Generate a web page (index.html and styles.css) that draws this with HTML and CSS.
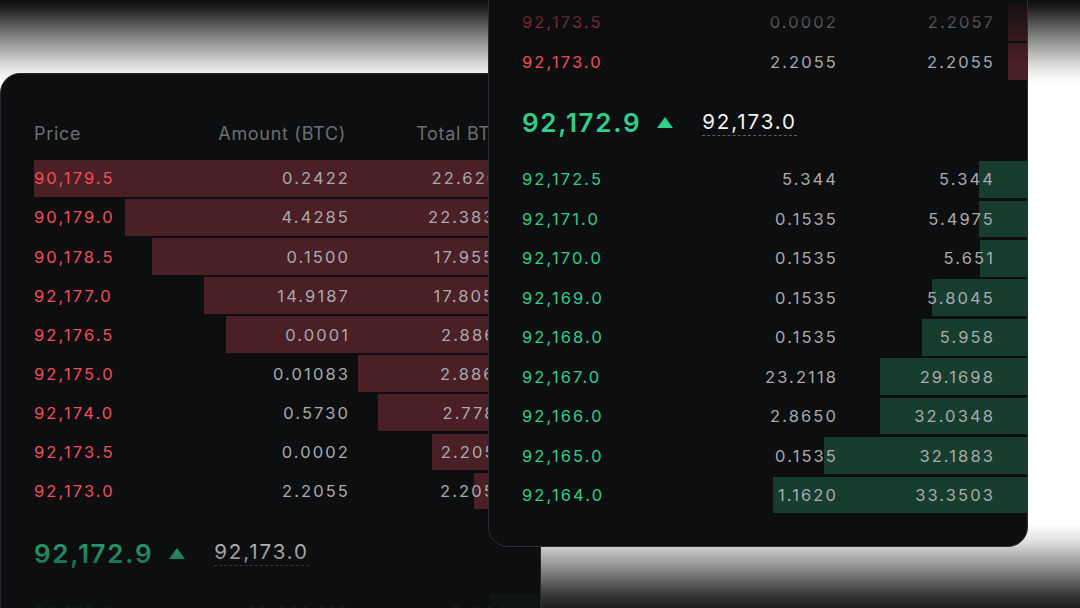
FILE: index.html
```html
<!DOCTYPE html>
<html lang="en">
<head>
<meta charset="utf-8">
<title>Order book</title>
<link rel="stylesheet" href="styles.css">
</head>
<body>
<div class="stage">

  <section class="book book-back">
    <div class="book-head">
      <span class="c-price">Price</span>
      <span class="c-amount">Amount (BTC)</span>
      <span class="c-total">Total BTC</span>
    </div>
    <div class="rows">
      <div class="row ask"><div class="bar" style="width:506px"></div><span class="c-price">90,179.5</span><span class="c-amount">0.2422</span><span class="c-total">22.6261</span></div>
      <div class="row ask"><div class="bar" style="width:415px"></div><span class="c-price">90,179.0</span><span class="c-amount">4.4285</span><span class="c-total">22.3839</span></div>
      <div class="row ask"><div class="bar" style="width:388px"></div><span class="c-price">90,178.5</span><span class="c-amount">0.1500</span><span class="c-total">17.9554</span></div>
      <div class="row ask"><div class="bar" style="width:336px"></div><span class="c-price">92,177.0</span><span class="c-amount">14.9187</span><span class="c-total">17.8054</span></div>
      <div class="row ask"><div class="bar" style="width:314px"></div><span class="c-price">92,176.5</span><span class="c-amount">0.0001</span><span class="c-total">2.8867</span></div>
      <div class="row ask"><div class="bar" style="width:182px"></div><span class="c-price">92,175.0</span><span class="c-amount">0.01083</span><span class="c-total">2.8866</span></div>
      <div class="row ask"><div class="bar" style="width:162px"></div><span class="c-price">92,174.0</span><span class="c-amount">0.5730</span><span class="c-total">2.7787</span></div>
      <div class="row ask"><div class="bar" style="width:108px"></div><span class="c-price">92,173.5</span><span class="c-amount">0.0002</span><span class="c-total">2.2057</span></div>
      <div class="row ask"><div class="bar" style="width:66px"></div><span class="c-price">92,173.0</span><span class="c-amount">2.2055</span><span class="c-total">2.2055</span></div>
    </div>
    <div class="mid">
      <span class="mid-price">92,172.9</span>
      <svg class="mid-arrow" viewBox="0 0 16 11" width="16" height="11"><path d="M8 0 L16 11 L0 11 Z"/></svg>
      <span class="mid-mark">92,173.0</span>
    </div>
    <div class="rows">
      <div class="row bid"><div class="bar" style="width:50px"></div><span class="c-price">92,172.5</span><span class="c-amount">12,201.310</span><span class="c-total">5.344</span></div>
    </div>
  </section>

  <section class="book book-front">
    <div class="rows">
      <div class="row ask"><div class="bar" style="width:19px"></div><span class="c-price">92,173.5</span><span class="c-amount">0.0002</span><span class="c-total">2.2057</span></div>
      <div class="row ask"><div class="bar" style="width:19px"></div><span class="c-price">92,173.0</span><span class="c-amount">2.2055</span><span class="c-total">2.2055</span></div>
    </div>
    <div class="mid">
      <span class="mid-price">92,172.9</span>
      <svg class="mid-arrow" viewBox="0 0 16 11" width="16" height="11"><path d="M8 0 L16 11 L0 11 Z"/></svg>
      <span class="mid-mark">92,173.0</span>
    </div>
    <div class="rows">
      <div class="row bid"><div class="bar" style="width:48px"></div><span class="c-price">92,172.5</span><span class="c-amount">5.344</span><span class="c-total">5.344</span></div>
      <div class="row bid"><div class="bar" style="width:48px"></div><span class="c-price">92,171.0</span><span class="c-amount">0.1535</span><span class="c-total">5.4975</span></div>
      <div class="row bid"><div class="bar" style="width:47px"></div><span class="c-price">92,170.0</span><span class="c-amount">0.1535</span><span class="c-total">5.651</span></div>
      <div class="row bid"><div class="bar" style="width:95px"></div><span class="c-price">92,169.0</span><span class="c-amount">0.1535</span><span class="c-total">5.8045</span></div>
      <div class="row bid"><div class="bar" style="width:105px"></div><span class="c-price">92,168.0</span><span class="c-amount">0.1535</span><span class="c-total">5.958</span></div>
      <div class="row bid"><div class="bar" style="width:147px"></div><span class="c-price">92,167.0</span><span class="c-amount">23.2118</span><span class="c-total">29.1698</span></div>
      <div class="row bid"><div class="bar" style="width:147px"></div><span class="c-price">92,166.0</span><span class="c-amount">2.8650</span><span class="c-total">32.0348</span></div>
      <div class="row bid"><div class="bar" style="width:203px"></div><span class="c-price">92,165.0</span><span class="c-amount">0.1535</span><span class="c-total">32.1883</span></div>
      <div class="row bid"><div class="bar" style="width:254px"></div><span class="c-price">92,164.0</span><span class="c-amount">1.1620</span><span class="c-total">33.3503</span></div>
    </div>
  </section>

</div>
</body>
</html>
```

FILE: styles.css
```css
* { box-sizing: border-box; }

html, body {
  margin: 0;
  padding: 0;
  background: #111;
}

.stage {
  position: relative;
  width: 1080px;
  height: 608px;
  overflow: hidden;
  font-family: Inter, "Liberation Sans", sans-serif;
  background: linear-gradient(to bottom,
    #0d0d0d 0px, #1e1e1e 8px, #6c6c6c 30px, #b4b4b2 52px, #dededc 66px,
    #f4f4f2 76px, #ffffff 84px, #ffffff 524px, #e4e4e2 540px,
    #b8b8b6 554px, #7a7a7a 574px, #3a3a3a 594px, #1c1c1c 608px);
}

.book {
  position: absolute;
  background: #0d0e10;
  border: 1px solid #26282c;
  overflow: hidden;
}

.book-back {
  z-index: 1;
  left: 0;
  top: 73px;
  width: 541px;
  height: 600px;
  border-radius: 20px 20px 0 0;
  padding-top: 40px;
}

.book-back::after {
  content: "";
  position: absolute;
  z-index: 2;
  left: 0;
  right: 0;
  top: 436px;
  bottom: 0;
  pointer-events: none;
  background: linear-gradient(to bottom,
    rgba(13,14,16,0) 0px, rgba(13,14,16,0.35) 42px, rgba(13,14,16,0.9) 90px, rgba(13,14,16,0.97) 110px);
}

.book-front {
  z-index: 2;
  left: 488px;
  top: -40px;
  width: 540px;
  height: 587px;
  border-radius: 20px;
  border-color: #2c2e32;
  padding-top: 43px;
}

.book-front::after {
  content: "";
  position: absolute;
  z-index: 2;
  left: 0;
  right: 0;
  top: 0;
  height: 110px;
  pointer-events: none;
  background: linear-gradient(to bottom,
    rgba(13,14,16,0.9) 40px, rgba(13,14,16,0) 100px);
}

.book-head,
.row {
  display: grid;
  grid-template-columns: 160px 154px 1fr;
  padding: 0 34px 0 33px;
  align-items: center;
}

.book-head {
  height: 38px;
  margin-bottom: 8px;
  color: #6b6e72;
  font-size: 18px;
  letter-spacing: 0.7px;
}

.c-amount,
.c-total {
  text-align: right;
  white-space: nowrap;
  margin-right: -2px;
}

.book-head .c-amount,
.book-head .c-total { margin-right: 2px; }

.c-price { white-space: nowrap; }

.rows {
  display: flex;
  flex-direction: column;
  gap: 2.4px;
}

.book-front .rows { gap: 2.76px; }

.row {
  position: relative;
  height: 36.7px;
  font-size: 16.5px;
  letter-spacing: 2.1px;
  color: #a9aaac;
}

.row > span {
  position: relative;
  z-index: 1;
}

.bar {
  position: absolute;
  right: 0;
  top: 0;
  bottom: 0;
}

.ask .bar { background: #4a1f25; }
.bid .bar { background: #173d2f; }

.ask .c-price { color: #f24d5f; }
.bid .c-price { color: #2ecf8d; }

.mid {
  display: flex;
  align-items: center;
  padding: 3px 0 0 33px;
  height: 80px;
  margin: 2.4px 0;
}

.book-front .mid {
  height: 75.5px;
  margin: 2.76px 0;
  padding-top: 4px;
}

.mid-price {
  font-size: 26px;
  font-weight: 600;
  color: #2ecf8d;
  letter-spacing: 1.7px;
}

.mid-arrow {
  margin-left: 16px;
  fill: #2ecf8d;
  flex: none;
}

.mid-mark {
  margin-left: 29px;
  font-size: 20.5px;
  letter-spacing: 1.9px;
  color: #f2f2f2;
  border-bottom: 1px dashed #5a5c60;
  padding-bottom: 1px;
  line-height: 24px;
}
```
